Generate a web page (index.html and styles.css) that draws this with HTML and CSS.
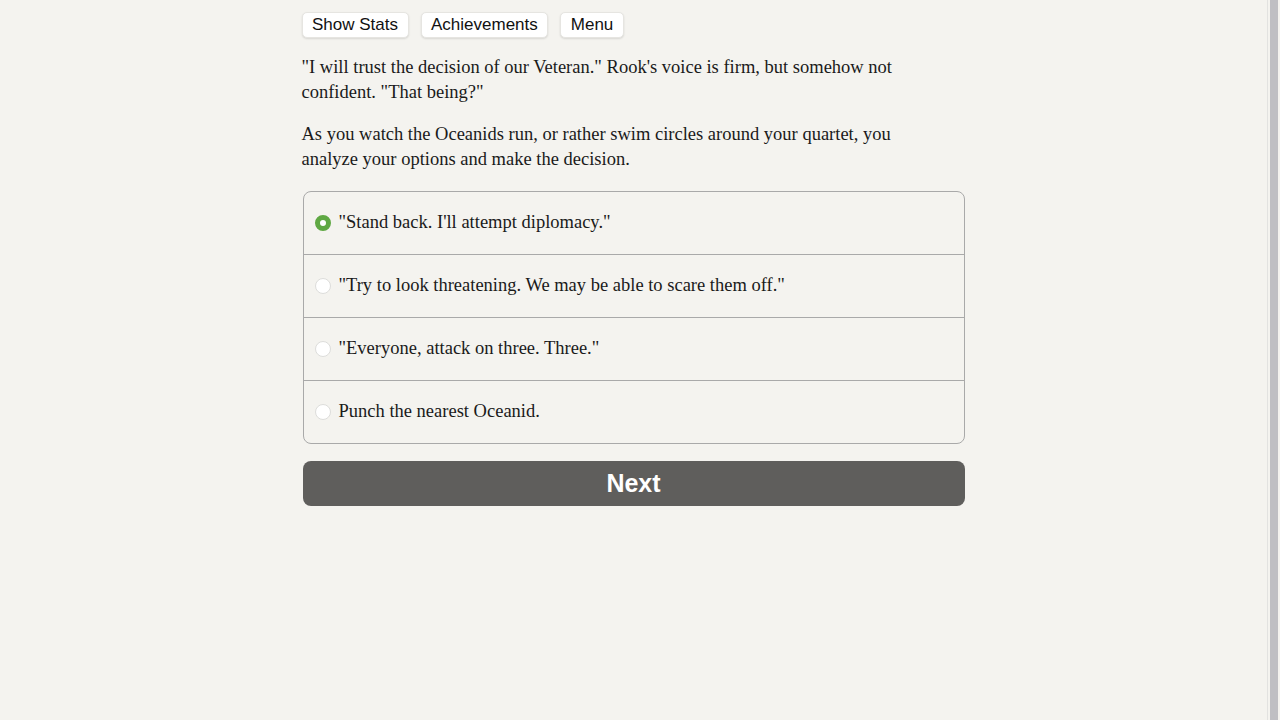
FILE: index.html
```html
<!DOCTYPE html>
<html>
<head>
<meta charset="utf-8">
<link rel="stylesheet" href="styles.css">
</head>
<body>
<div class="page">
  <main class="main">
    <div class="container">
      <div class="buttons">
        <button class="tbtn">Show Stats</button>
        <button class="tbtn">Achievements</button>
        <button class="tbtn">Menu</button>
      </div>
      <p class="para">"I will trust the decision of our Veteran." Rook's voice is firm, but somehow not confident. "That being?"</p>
      <p class="para">As you watch the Oceanids run, or rather swim circles around your quartet, you analyze your options and make the decision.</p>
      <div class="choices">
        <label class="choice"><span class="radio checked"></span><span class="ctext">"Stand back. I'll attempt diplomacy."</span></label>
        <label class="choice"><span class="radio"></span><span class="ctext">"Try to look threatening. We may be able to scare them off."</span></label>
        <label class="choice"><span class="radio"></span><span class="ctext">"Everyone, attack on three. Three."</span></label>
        <label class="choice"><span class="radio"></span><span class="ctext">Punch the nearest Oceanid.</span></label>
      </div>
      <button class="next">Next</button>
    </div>
  </main>
  <div class="rail"><div class="thumb"></div></div>
</div>
</body>
</html>
```

FILE: styles.css
```css
html, body {
  margin: 0;
  padding: 0;
  height: 100%;
  background: #f4f3ef;
  overflow: hidden;
}
.page {
  display: flex;
  height: 720px;
}
.main {
  flex: 1;
}
.container {
  width: 662px;
  margin: 0 auto;
  padding-top: 12px;
}
.buttons {
  display: flex;
  gap: 12px;
  margin-left: -1px;
}
.tbtn {
  font-family: "Liberation Sans", Arial, sans-serif;
  font-size: 17px;
  color: #111;
  background: #fff;
  border: 1px solid #e6e5e1;
  border-radius: 5px;
  box-shadow: 0 1px 2px rgba(0,0,0,0.12);
  height: 26px;
  padding: 0 9.5px;
  line-height: 24px;
}
.para {
  font-family: "Liberation Serif", "Times New Roman", serif;
  font-size: 18.5px;
  line-height: 25px;
  color: #1a1a1a;
  margin: 17px 24px 17px -1px;
}
.choices {
  border: 1px solid #a9a9a9;
  border-radius: 8px;
  overflow: hidden;
  margin-top: 19px;
}
.choice {
  display: flex;
  align-items: center;
  height: 62px;
  padding-left: 11px;
  border-top: 1px solid #a9a9a9;
}
.choice:first-child {
  border-top: none;
}
.radio {
  width: 16px;
  height: 16px;
  border-radius: 50%;
  background: #fff;
  border: 1px solid #dddddb;
  box-sizing: border-box;
  margin-right: 8px;
  flex: none;
}
.radio.checked {
  background: #fff;
  border: 5px solid #5fa843;
}
.ctext {
  font-family: "Liberation Serif", "Times New Roman", serif;
  font-size: 18.5px;
  color: #1a1a1a;
  position: relative;
  top: -1px;
}
.next {
  display: block;
  width: 100%;
  height: 45px;
  margin-top: 17px;
  background: #5f5e5c;
  color: #fff;
  border: none;
  border-radius: 8px;
  font-family: "Liberation Sans", Arial, sans-serif;
  font-weight: bold;
  font-size: 25px;
}
.rail {
  width: 10px;
  flex: none;
  background: #f4f3ef;
  border-left: 1px solid #e2e2e0;
  display: flex;
  padding-left: 2px;
}
.thumb {
  width: 8px;
  background: #bfbfc3;
}
```
